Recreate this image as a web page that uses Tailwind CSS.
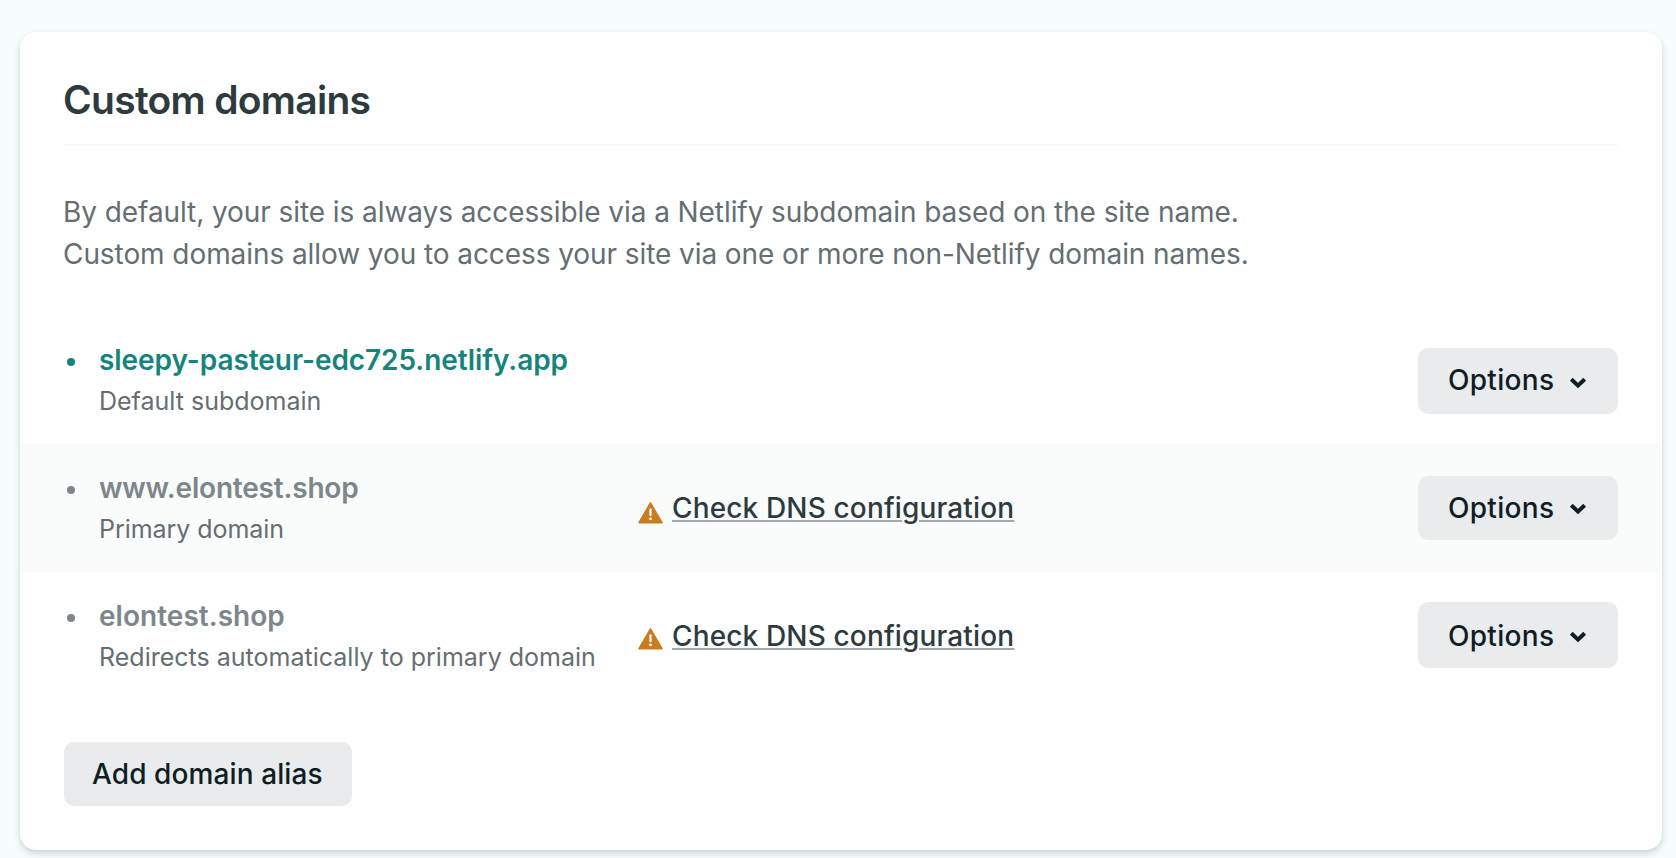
<!DOCTYPE html>
<html lang="en">
<head>
<meta charset="utf-8">
<title>Custom domains</title>
<script src="https://cdn.jsdelivr.net/npm/@tailwindcss/browser@4"></script>
</head>
<body class="h-[858px] overflow-hidden bg-[#f7fdfd] pt-8 pl-5 font-['Inter',sans-serif] text-[28px] leading-[42px]">
<main class="h-[818px] w-[1642px] rounded-2xl bg-white pt-11 shadow-[0_4px_8px_0_rgba(14,30,37,0.12),0_2px_4px_0_rgba(14,30,37,0.08)]">
  <header class="mx-11 border-b-2 border-[#f8f9f9] pb-5">
    <h1 class="-ml-px text-[39px] leading-[48px] font-semibold tracking-[-0.71px] text-[#2d3b41]">Custom domains</h1>
  </header>
  <p class="mx-11 mt-[45px] -ml-px pl-11 tracking-[-0.075px] whitespace-nowrap text-[#646e73]">By default, your site is always accessible via a Netlify subdomain based on the site name.<br>Custom domains allow you to access your site via one or more non-Netlify domain names.</p>

  <ul class="mt-[41px]">
    <li class="flex h-32 items-start px-11">
      <span class="mt-[42px] ml-[3px] size-2 rounded-full bg-[#15847d]"></span>
      <div class="ml-6 w-[537px] pt-[23px] whitespace-nowrap">
        <a class="block font-semibold tracking-[-0.06px] text-[#15847d]">sleepy-pasteur-edc725.netlify.app</a>
        <p class="text-[25px] leading-10 text-[#646e73]">Default subdomain</p>
      </div>
      <button class="mt-8 ml-auto flex h-[66px] w-[200px] items-start rounded-[10px] bg-[#e9ebec] pt-[11px] pl-[30px] font-medium tracking-[0.3px] text-[#0e1e25]">Options
        <svg class="mt-[18px] ml-[15px] h-3 w-[18px]" viewBox="0 0 18 12" fill="none" stroke="currentColor" stroke-width="4"><path d="M2.3 2.2 9 8.6l6.7-6.4"/></svg>
      </button>
    </li>
    <li class="flex h-32 items-start bg-[#fafbfb] px-11">
      <span class="mt-[42px] ml-[3px] size-2 rounded-full bg-[#7d878b]"></span>
      <div class="ml-6 w-[537px] pt-[23px] whitespace-nowrap">
        <a class="block font-semibold tracking-[-0.2px] text-[#7d878b]">www.elontest.shop</a>
        <p class="text-[25px] leading-10 tracking-[-0.05px] text-[#646e73]">Primary domain</p>
      </div>
      <div class="flex items-start pt-[43px]">
        <svg class="mt-[15px] ml-0.5 h-[22px] w-[25px]" viewBox="0 0 25 22"><path d="M12.5 1 24 20.6H1Z" fill="#c97d1e" stroke="#c97d1e" stroke-width="1.6" stroke-linejoin="round"/><path d="M12.5 7.3v5.9" stroke="#fff" stroke-width="2.2" stroke-linecap="round"/><circle cx="12.5" cy="16.9" r="1.4" fill="#fff"/></svg>
        <a class="ml-[9px] font-medium tracking-[0.15px] text-[#2d3b41] underline decoration-[#a3a9ac] decoration-2 underline-offset-2">Check DNS configuration</a>
      </div>
      <button class="mt-8 ml-auto flex h-16 w-[200px] items-start rounded-[10px] bg-[#e9ebec] pt-[11px] pl-[30px] font-medium tracking-[0.3px] text-[#0e1e25]">Options
        <svg class="mt-4 ml-[15px] h-3 w-[18px]" viewBox="0 0 18 12" fill="none" stroke="currentColor" stroke-width="4"><path d="M2.3 2.2 9 8.6l6.7-6.4"/></svg>
      </button>
    </li>
    <li class="flex h-32 items-start px-11">
      <span class="mt-[42px] ml-[3px] size-2 rounded-full bg-[#7d878b]"></span>
      <div class="ml-6 w-[537px] pt-[23px] whitespace-nowrap">
        <a class="block font-semibold tracking-[0.03px] text-[#7d878b]">elontest.shop</a>
        <p class="text-[25px] leading-10 tracking-[0.01px] text-[#646e73]">Redirects automatically to primary domain</p>
      </div>
      <div class="flex items-start pt-[43px]">
        <svg class="mt-[13px] ml-0.5 h-[22px] w-[25px]" viewBox="0 0 25 22"><path d="M12.5 1 24 20.6H1Z" fill="#c97d1e" stroke="#c97d1e" stroke-width="1.6" stroke-linejoin="round"/><path d="M12.5 7.3v5.9" stroke="#fff" stroke-width="2.2" stroke-linecap="round"/><circle cx="12.5" cy="16.9" r="1.4" fill="#fff"/></svg>
        <a class="ml-[9px] font-medium tracking-[0.15px] text-[#2d3b41] underline decoration-[#a3a9ac] decoration-2 underline-offset-2">Check DNS configuration</a>
      </div>
      <button class="mt-[30px] ml-auto flex h-[66px] w-[200px] items-start rounded-[10px] bg-[#e9ebec] pt-[13px] pl-[30px] font-medium tracking-[0.3px] text-[#0e1e25]">Options
        <svg class="mt-4 ml-[15px] h-3 w-[18px]" viewBox="0 0 18 12" fill="none" stroke="currentColor" stroke-width="4"><path d="M2.3 2.2 9 8.6l6.7-6.4"/></svg>
      </button>
    </li>
  </ul>

  <button class="mt-[42px] ml-11 flex h-16 w-72 items-start rounded-[10px] bg-[#e9ebec] pt-[11px] pl-7 font-medium tracking-[0.1px] text-[#0e1e25]">Add domain alias</button>
</main>
</body>
</html>
